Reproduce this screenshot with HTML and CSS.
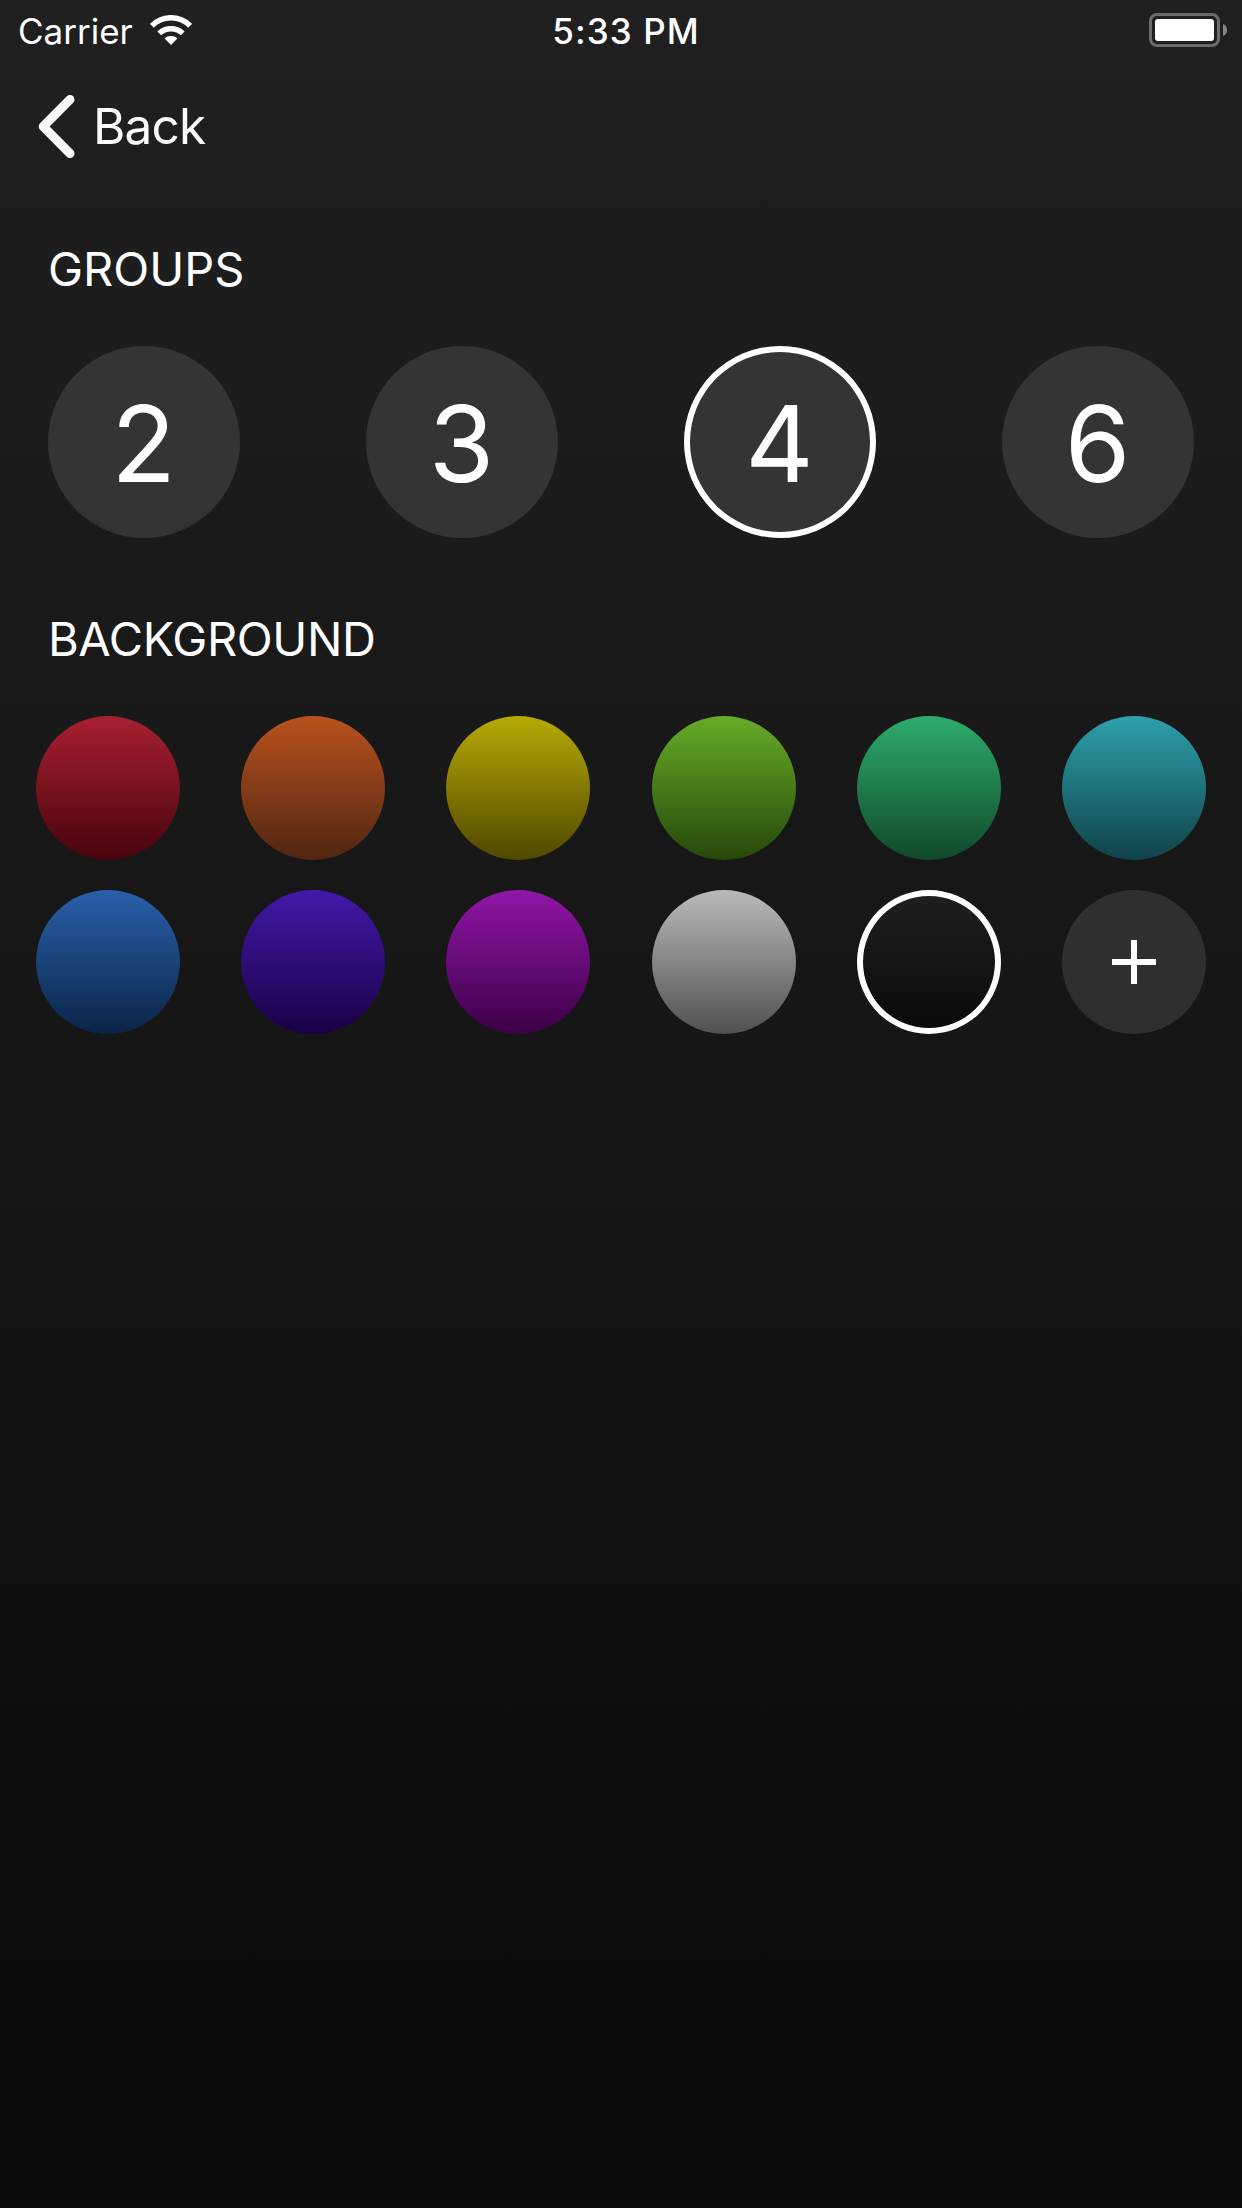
FILE: index.html
```html
<!DOCTYPE html>
<html lang="en">
<head>
<meta charset="utf-8">
<title>Settings</title>
<link rel="stylesheet" href="styles.css">
</head>
<body>
<div class="screen">
  <header class="status">
    <div class="status-left">
      <span class="carrier">Carrier</span>
      <svg class="wifi" width="42" height="30" viewBox="0 0 42 30">
        <path d="M21 30 14.6 23.5C18 20.3 24 20.3 27.4 23.5Z" fill="#fff"/>
        <path d="M9.200 18.400C15.800 12.100 26.200 12.100 32.800 18.400" fill="none" stroke="#fff" stroke-width="5.400"/>
        <path d="M1.800 10.800C12.500 .1 29.500 .1 40.200 10.800" fill="none" stroke="#fff" stroke-width="5.600"/>
      </svg>
    </div>
    <time class="clock">5:33 PM</time>
    <svg class="battery" width="79" height="34" viewBox="0 0 79 34">
      <rect x="1.5" y="1.5" width="68" height="31" rx="6.5" fill="none" stroke="#6b6b6b" stroke-width="3"/>
      <rect x="6" y="6" width="59" height="22" rx="3" fill="#fff"/>
      <path d="M74 11C79.300 12.500 79.300 21.500 74 23Z" fill="#858585"/>
    </svg>
  </header>
  <nav class="nav">
    <svg class="chevron" width="37" height="63" viewBox="0 0 37 63">
      <path d="M32 4.500 5.200 31.500 32 58.500" fill="none" stroke="#fafafa" stroke-width="9" stroke-linecap="round" stroke-linejoin="round"/>
    </svg>
    <span class="back">Back</span>
  </nav>
  <section class="groups">
    <h2 class="title groups-title">GROUPS</h2>
    <div class="group-row">
      <div class="group">2</div>
      <div class="group">3</div>
      <div class="group selected">4</div>
      <div class="group">6</div>
    </div>
  </section>
  <section class="background">
    <h2 class="title background-title">BACKGROUND</h2>
    <div class="swatches">
      <div class="swatch red"></div>
      <div class="swatch orange"></div>
      <div class="swatch yellow"></div>
      <div class="swatch lime"></div>
      <div class="swatch green"></div>
      <div class="swatch teal"></div>
      <div class="swatch blue"></div>
      <div class="swatch indigo"></div>
      <div class="swatch purple"></div>
      <div class="swatch gray"></div>
      <div class="swatch black selected"></div>
      <div class="swatch add">
        <svg width="44" height="44" viewBox="0 0 44 44"><path d="M22 0V44M0 22H44" stroke="#fff" stroke-width="6"/></svg>
      </div>
    </div>
  </section>
</div>
</body>
</html>
```
FILE: styles.css
```css
* { box-sizing: border-box; }
body {
  margin: 0;
  background: #0a0a0a;
  color: #fff;
  font-family: Inter, "Liberation Sans", sans-serif;
}
.screen {
  width: 1242px;
  height: 2208px;
  background: linear-gradient(#202020, #0a0a0a);
}
.status {
  height: 60px;
  padding: 0 14px 0 18px;
  display: grid;
  grid-template-columns: 1fr auto 1fr;
  grid-template-rows: 60px;
  align-items: center;
}
.status-left { display: flex; align-items: center; gap: 18px; }
.carrier { width: 114px; padding-top: 2px; font-size: 35px; line-height: 58px; white-space: nowrap; }
.clock { font-size: 35px; line-height: 58px; font-weight: 500; letter-spacing: 1.1px; padding: 2px 0 0 6px; }
.battery { justify-self: end; }
.nav {
  height: 132px;
  padding: 1px 38px 0;
  display: flex;
  align-items: center;
  gap: 18px;
}
.back { padding-bottom: 2px; font-size: 49.5px; letter-spacing: -0.8px; color: #fafafa; }
.title {
  margin: 0;
  padding-left: 48px;
  font-size: 47px;
  line-height: 60px;
  font-weight: 400;
}
.groups { padding-top: 47px; }
.groups-title { letter-spacing: 0; }
.group-row {
  display: flex;
  justify-content: space-between;
  padding: 47px 48px 0;
}
.group {
  width: 192px;
  height: 192px;
  padding: 3px 1px 0 0;
  border-radius: 50%;
  display: flex;
  align-items: center;
  justify-content: center;
  font-size: 106px;
  line-height: 189px;
  background: rgba(255, 255, 255, 0.11);
}
.selected { box-shadow: inset 0 0 0 6px #fff; }
.background { padding-top: 71px; }
.background-title { letter-spacing: -0.4px; }
.swatches {
  display: grid;
  grid-template-columns: repeat(6, 144px);
  justify-content: space-between;
  row-gap: 30px;
  padding: 47px 36px 0;
}
.swatch {
  height: 144px;
  border-radius: 50%;
  display: flex;
  align-items: center;
  justify-content: center;
}
.red { background: linear-gradient(#a82030, #47040e); }
.orange { background: linear-gradient(#b8521e, #502611); }
.yellow { background: linear-gradient(#b8aa05, #504800); }
.lime { background: linear-gradient(#66ac28, #27480b); }
.green { background: linear-gradient(#2eac6c, #10482a); }
.teal { background: linear-gradient(#2ea0ac, #104248); }
.blue { background: linear-gradient(#2a60aa, #0b2548); }
.indigo { background: linear-gradient(#421aa8, #190046); }
.purple { background: linear-gradient(#9016a8, #3c0046); }
.gray { background: linear-gradient(#bababa, #505050); }
.black { background: linear-gradient(#202020, #090909); }
.add { background: rgba(255, 255, 255, 0.11); }
```
